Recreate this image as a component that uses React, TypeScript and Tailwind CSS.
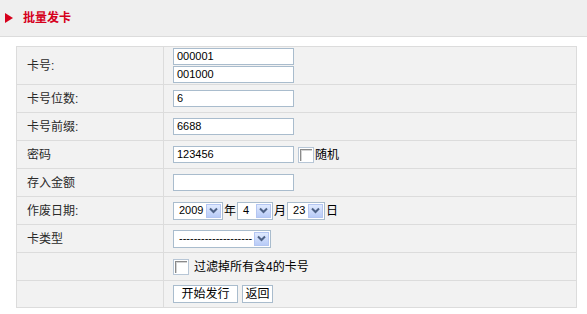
import { FC, ReactNode } from "react";

type RowProps = {
  label?: string;
  tall?: boolean;
  last?: boolean;
  children?: ReactNode;
};

type SelectProps = {
  value: string;
  width: string;
};

const font = { fontFamily: '"Liberation Sans", "Noto Sans CJK SC", sans-serif' };

const Row: FC<RowProps> = (props) => (
  <div
    className={`flex ${props.tall ? "h-[38px]" : props.last ? "h-[26px]" : "h-[28px]"} ${
      props.last ? "" : "border-b border-[#dcdcdc]"
    }`}
  >
    <div className="w-[147px] shrink-0 flex items-center pl-[10px] border-r border-[#dcdcdc] text-[12px] text-[#2a2a2a]">
      {props.label}
    </div>
    <div className="flex-1 flex items-center pl-[9px]">{props.children}</div>
  </div>
);

const TextBox: FC<{ value?: string }> = (props) => (
  <div className="w-[121px] h-[17px] border border-[#a9bccd] bg-white flex items-center pl-[3px] text-[11px] text-black leading-none">
    {props.value}
  </div>
);

// XP style drop arrow
const DropButton: FC = () => (
  <div className="w-[15px] h-full border border-[#b4c6f2] bg-gradient-to-b from-[#e0eafe] to-[#b8cbf7] flex items-center justify-center">
    <svg width="9" height="7" viewBox="0 0 9 7">
      <path d="M1 1.5 L4.5 5 L8 1.5" fill="none" stroke="#4d6185" strokeWidth="2" />
    </svg>
  </div>
);

const Select: FC<SelectProps> = (props) => (
  <div
    className={`${props.width} h-[18px] border border-[#a9bccd] bg-white flex items-stretch p-[1px]`}
  >
    <div className="flex-1 flex items-center pl-[4px] text-[11px] text-black leading-none">
      {props.value}
    </div>
    <DropButton />
  </div>
);

const CheckBox: FC = () => (
  <div className="w-[16px] h-[16px] border border-[#b7c6d6] bg-white p-[1px]">
    <div className="w-full h-full bg-white shadow-[inset_1px_1px_0_#8a8a8a,inset_2px_2px_0_#d4d4d4]" />
  </div>
);

const Button: FC<{ text: string; width: string }> = (props) => (
  <div
    className={`${props.width} h-[18px] border border-[#a9bccd] bg-white flex items-center justify-center text-[12px] text-black leading-none`}
  >
    {props.text}
  </div>
);

const App: FC = () => {
  return (
    <div className="w-[587px] h-[314px] bg-white overflow-hidden" style={font}>
      {/* Title bar */}
      <div className="h-[37px] bg-[#efefef] border-b border-[#dcdcdc] flex items-center pl-[5px]">
        <svg width="8" height="10" viewBox="0 0 8 10" className="mr-[10px]">
          <path d="M0 0 L8 5 L0 10 Z" fill="#d6001c" />
        </svg>
        <span className="text-[12px] font-bold text-[#d6001c]">批量发卡</span>
      </div>

      {/* Form table */}
      <div className="ml-[16px] mt-[9px] w-[561px] border border-[#dcdcdc] bg-[#f2f2f2]">
        <Row label="卡号:" tall>
          <div className="flex flex-col gap-[1px]">
            <TextBox value="000001" />
            <TextBox value="001000" />
          </div>
        </Row>
        <Row label="卡号位数:">
          <TextBox value="6" />
        </Row>
        <Row label="卡号前缀:">
          <TextBox value="6688" />
        </Row>
        <Row label="密码">
          <TextBox value="123456" />
          <div className="ml-[4px]">
            <CheckBox />
          </div>
          <span className="text-[12px] text-black ml-[1px]">随机</span>
        </Row>
        <Row label="存入金额">
          <TextBox />
        </Row>
        <Row label="作废日期:">
          <div className="flex items-center gap-[1px] text-[12px] text-black">
            <Select value="2009" width="w-[50px]" />
            <span>年</span>
            <Select value="4" width="w-[36px]" />
            <span>月</span>
            <Select value="23" width="w-[38px]" />
            <span>日</span>
          </div>
        </Row>
        <Row label="卡类型">
          <Select value="--------------------" width="w-[98px]" />
        </Row>
        <Row>
          <CheckBox />
          <span className="text-[12px] text-black ml-[5px]">过滤掉所有含4的卡号</span>
        </Row>
        <Row last>
          <div className="flex gap-[4px]">
            <Button text="开始发行" width="w-[65px]" />
            <Button text="返回" width="w-[31px]" />
          </div>
        </Row>
      </div>
    </div>
  );
};

export default App;
